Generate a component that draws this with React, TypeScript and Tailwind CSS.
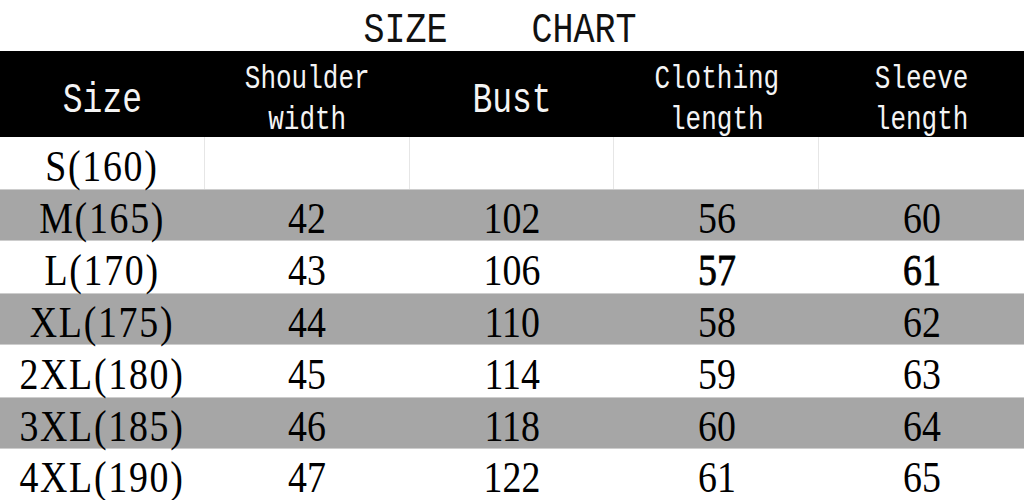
const rows = [
  { size: "S(160)", values: ["", "", "", ""] },
  { size: "M(165)", values: ["42", "102", "56", "60"] },
  { size: "L(170)", values: ["43", "106", "57", "61"], boldFrom: 2 },
  { size: "XL(175)", values: ["44", "110", "58", "62"] },
  { size: "2XL(180)", values: ["45", "114", "59", "63"] },
  { size: "3XL(185)", values: ["46", "118", "60", "64"] },
  { size: "4XL(190)", values: ["47", "122", "61", "65"] },
];

const serif = "font-['Liberation_Serif','Times_New_Roman',serif]";
const mono = "font-['Liberation_Mono','DejaVu_Sans_Mono',monospace]";

function HeadCell({ lines, big }: { lines: string[]; big?: boolean }) {
  return (
    <div className="flex flex-col items-center justify-center pt-2">
      {lines.map((line) => (
        <span
          key={line}
          className={`${mono} scale-y-[1.3] leading-[41px] text-[#f4f4f4] ${big ? "text-[33px]" : "text-[26px]"}`}
        >
          {line}
        </span>
      ))}
    </div>
  );
}

export default function App() {
  return (
    <div className="w-[1024px] bg-white">
      <div className="flex h-[51px] items-center justify-center pr-6 pt-3">
        <span className={`${mono} whitespace-pre text-[35px] scale-y-[1.2] text-[#111]`}>SIZE    CHART</span>
      </div>

      <div className="grid h-[86px] grid-cols-5 bg-black">
        <HeadCell lines={["Size"]} big />
        <HeadCell lines={["Shoulder", "width"]} />
        <HeadCell lines={["Bust"]} big />
        <HeadCell lines={["Clothing", "length"]} />
        <HeadCell lines={["Sleeve", "length"]} />
      </div>

      {rows.map((row, i) => {
        const gray = i % 2 === 1;
        const last = i === rows.length - 1;
        return (
          <div
            key={row.size}
            className={`grid grid-cols-5 ${last ? "h-[51px]" : "h-[52px]"} ${gray ? "bg-[#a6a6a6] border-y border-[#cdcdcd]" : "bg-white"}`}
          >
            {[row.size, ...row.values].map((v, j) => (
              <div
                key={j}
                className={`flex items-center justify-center ${i === 0 && j < 4 ? "border-r border-[#e6e6e6]" : ""}`}
              >
                <span
                  className={`${serif} scale-x-[0.86] pt-[7px] text-[44px] leading-none text-black ${
                    row.boldFrom !== undefined && j - 1 >= row.boldFrom ? "[-webkit-text-stroke:0.8px_black]" : ""
                  } ${j === 0 ? "tracking-[2px]" : ""}`}
                >
                  {v}
                </span>
              </div>
            ))}
          </div>
        );
      })}
    </div>
  );
}
